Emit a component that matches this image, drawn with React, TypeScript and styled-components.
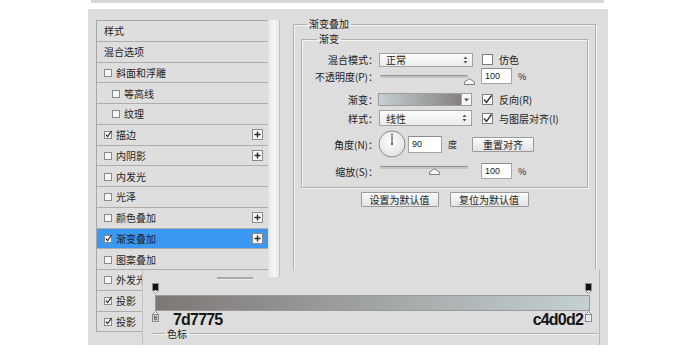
import React from 'react'
import styled, { createGlobalStyle } from 'styled-components'

const GlobalStyle = createGlobalStyle`
  html, body { margin: 0; padding: 0; background: #fff; }
  body {
    font-family: "Liberation Sans", "Noto Sans CJK SC", sans-serif;
    font-size: 10px;
    color: #222;
  }
`

const cjk = `"Noto Sans CJK SC", "Liberation Sans", sans-serif`

const Page = styled.div`
  width: 690px;
  height: 356px;
  overflow: hidden;
  background: #fff;
`
const TopStrip = styled.div`
  margin-left: 91px;
  width: 513px;
  height: 3px;
  background: #d6d6d6;
`
const Dialog = styled.div`
  position: relative;
  margin: 6px 0 0 88px;
  width: 520px;
  height: 336px;
  box-sizing: border-box;
  padding: 11px 0 0 8px;
  background: #dddddd;
  display: flex;
  align-items: flex-start;
`

/* ---------- style list ---------- */
const ListBox = styled.div`
  width: 172px;
  box-sizing: border-box;
  border-top: 1px solid #a6a6a6;
  border-left: 1px solid #a6a6a6;
  display: flex;
  flex-direction: column;
`
const ListRow = styled.div<{ $active?: boolean; $indent?: boolean }>`
  height: 20.75px;
  box-sizing: border-box;
  border-bottom: 1px solid #adadad;
  background: ${p => (p.$active ? '#3b98f2' : '#dedede')};
  display: flex;
  align-items: center;
  gap: 3px;
  padding: 0 5px 0 ${p => (p.$indent ? 15 : 7)}px;
  font-family: ${cjk};
  font-size: 10px;
  color: #1e1e1e;
`
const RowName = styled.span`
  flex: 1;
  white-space: nowrap;
`
const Scrollbar = styled.div`
  position: relative;
  z-index: 2;
  width: 12px;
  height: 257px;
  box-sizing: border-box;
  background: linear-gradient(to right, #e4e4e4, #f7f7f7 50%, #e9e9e9);
  border-right: 1px solid #c4c4c4;
`

/* ---------- right pane ---------- */
const RightPane = styled.div`
  margin: -2px 0 0 13px;
`
const Fieldset = styled.fieldset`
  margin: 0;
  min-width: 0;
  box-sizing: border-box;
  border: 1px solid #b0b0b0;
  box-shadow: inset 1px 1px 0 #f3f3f3, 1px 1px 0 #f3f3f3;
`
const OuterSet = styled(Fieldset)`
  width: 303px;
  height: 322px;
  padding: 3px 7px 0;
`
const InnerSet = styled(Fieldset)`
  padding: 7px 0 8px;
`
const Legend = styled.legend<{ $left: number }>`
  margin-left: ${p => p.$left}px;
  padding: 0 2px;
  font-family: ${cjk};
  font-size: 10px;
  line-height: 12px;
  color: #222;
`
const FormRow = styled.div<{ $h: number; $top: number }>`
  display: grid;
  grid-template-columns: 76px auto;
  align-items: center;
  height: ${p => p.$h}px;
  margin-top: ${p => p.$top}px;
`
const Label = styled.div`
  text-align: right;
  white-space: nowrap;
  font-family: ${cjk};
  font-size: 10px;
  color: #222;
`
const Controls = styled.div`
  display: flex;
  align-items: center;
  height: 100%;
`
const Select = styled.div<{ $w: number; $h: number }>`
  width: ${p => p.$w}px;
  height: ${p => p.$h}px;
  margin-left: 1px;
  box-sizing: border-box;
  border: 1px solid #a3a3a3;
  background: linear-gradient(#fcfcfc, #ececec);
  display: flex;
  align-items: center;
  justify-content: space-between;
  padding: 0 4px 0 6px;
  font-family: ${cjk};
  font-size: 10px;
`
const Box = styled.div<{ $gap: number }>`
  width: 11px;
  height: 11px;
  margin-left: ${p => p.$gap}px;
  box-sizing: border-box;
  border: 1px solid #7d7d7d;
  background: #fff;
  display: flex;
  align-items: center;
  justify-content: center;
`
const BoxText = styled.span`
  margin-left: 6px;
  white-space: nowrap;
  font-family: ${cjk};
  font-size: 10px;
`
const Slider = styled.div`
  position: relative;
  width: 93px;
  height: 100%;
  margin-left: 2px;
`
const Track = styled.div<{ $top: number }>`
  position: absolute;
  left: 0;
  top: ${p => p.$top}px;
  width: 88px;
  height: 3px;
  border-radius: 2px;
  background: #c4c4c4;
  border-top: 1px solid #929292;
  box-sizing: border-box;
`
const Thumb = styled.svg<{ $x: number; $top: number }>`
  position: absolute;
  left: ${p => p.$x}px;
  top: ${p => p.$top}px;
`
const NumField = styled.div<{ $w: number; $h: number; $gap: number }>`
  width: ${p => p.$w}px;
  height: ${p => p.$h}px;
  margin-left: ${p => p.$gap}px;
  box-sizing: border-box;
  border: 1px solid #a5a5a5;
  border-top-color: #8a8a8a;
  background: #fff;
  padding-left: 3px;
  display: flex;
  align-items: center;
  font-family: "Liberation Sans", sans-serif;
  font-size: 9px;
  color: #222;
`
const Unit = styled.span<{ $gap: number }>`
  margin-left: ${p => p.$gap}px;
  font-family: ${cjk};
  font-size: 9px;
`
const GradPreview = styled.div`
  width: 94px;
  height: 13px;
  box-sizing: border-box;
  border: 1px solid #9d9d9d;
  background: linear-gradient(to right, #c4d0d2, #7d7775);
  display: flex;
  justify-content: flex-end;
`
const DropTab = styled.div`
  width: 9px;
  height: 100%;
  background: #f6f6f6;
  border-left: 1px solid #a8a8a8;
  display: flex;
  align-items: center;
  justify-content: center;
`
const Button = styled.div<{ $w: number; $gap?: number }>`
  width: ${p => p.$w}px;
  height: 15px;
  margin-left: ${p => p.$gap ?? 0}px;
  box-sizing: border-box;
  border: 1px solid #9a9a9a;
  border-radius: 1px;
  background: linear-gradient(#fbfbfb, #e3e3e3);
  box-shadow: inset 0 1px 0 #fff;
  display: flex;
  align-items: center;
  justify-content: center;
  font-family: ${cjk};
  font-size: 10px;
  color: #222;
`
const ButtonRow = styled.div`
  display: flex;
  justify-content: center;
  gap: 11px;
  margin-top: 4px;
`

/* ---------- gradient editor crop, lying over the dialog ---------- */
const Overlay = styled.div`
  position: absolute;
  z-index: 1;
  left: 54px;
  top: 261px;
  width: 458px;
  height: 75px;
  box-sizing: border-box;
  background: #dddddd;
  border-left: 1px solid #c3c3c3;
  border-right: 1px solid #b8b8b8;
  padding-left: 9px;
  display: flex;
  flex-direction: column;
`
const DecoRow = styled.div`
  height: 15px;
  display: flex;
  align-items: flex-start;
`
const DecoLine = styled.div`
  margin: 7px 0 0 65px;
  width: 36px;
  height: 2px;
  background: #a8a8a8;
  border-bottom: 1px solid #ececec;
`
const StopRow = styled.div<{ $h: number }>`
  width: 440px;
  height: ${p => p.$h}px;
  display: flex;
  align-items: flex-start;
  justify-content: space-between;
`
const Bar = styled.div`
  margin: 1px 0 0 3px;
  width: 435px;
  height: 19px;
  box-sizing: border-box;
  border: 1px solid #9a9a9a;
  background: linear-gradient(to right, #7d7775, #c4d0d2);
`
const StopLabel = styled.span<{ $left?: boolean }>`
  flex: ${p => (p.$left ? 1 : 'none')};
  margin: 1px ${p => (p.$left ? 0 : 2)}px 0 ${p => (p.$left ? 14 : 0)}px;
  font-family: "Liberation Sans", sans-serif;
  font-weight: bold;
  font-size: 16px;
  line-height: 16px;
  letter-spacing: -0.8px;
  color: #161616;
`
const ColorStopSet = styled.fieldset`
  margin: 0;
  width: 446px;
  height: 20px;
  box-sizing: border-box;
  padding: 0;
  border: 0;
  border-top: 1px solid #b0b0b0;
  box-shadow: 0 1px 0 #f3f3f3 inset;
`

/* ---------- icons ---------- */
const SmallBox = ({ on }: { on: boolean }) => (
  <svg width="9" height="9" viewBox="0 0 9 9">
    <rect x="0.5" y="1.5" width="7" height="7" fill="#f6f6f6" stroke="#8a8a8a" />
    {on && <path d="M1.8 4.6 L3.6 6.6 L7.6 1" fill="none" stroke="#2a2a2a" strokeWidth="1.2" />}
  </svg>
)
const PlusBox = () => (
  <svg width="11" height="11" viewBox="0 0 11 11">
    <rect x="0.5" y="0.5" width="10" height="10" fill="#f8f8f8" stroke="#8a8a8a" />
    <path d="M5.5 2.5 V8.5 M2.5 5.5 H8.5" stroke="#2a2a2a" strokeWidth="1.4" />
  </svg>
)
const Tick = () => (
  <svg width="9" height="9" viewBox="0 0 9 9">
    <path d="M1 4.5 L3.5 7.5 L8.5 0.5" fill="none" stroke="#2b2b2b" strokeWidth="1.3" />
  </svg>
)
const UpDown = () => (
  <svg width="5" height="8" viewBox="0 0 5 8">
    <path d="M0.5 3 L2.5 0.5 L4.5 3 Z M0.5 5 L2.5 7.5 L4.5 5 Z" fill="#555" />
  </svg>
)
const DownArrow = () => (
  <svg width="5" height="4" viewBox="0 0 5 4">
    <path d="M0 0.5 H5 L2.5 3.5 Z" fill="#555" />
  </svg>
)
const ThumbShape = ({ x, top }: { x: number; top: number }) => (
  <Thumb $x={x} $top={top} width="11" height="7" viewBox="0 0 11 7">
    <path d="M0.5 6.5 V4 L5.5 0.8 L10.5 4 V6.5 Z" fill="#fafafa" stroke="#7c7c7c" />
  </Thumb>
)
const Dial = () => (
  <svg width="28" height="28" viewBox="0 0 28 28">
    <defs>
      <radialGradient id="dialFill" cx="45%" cy="40%" r="60%">
        <stop offset="0" stopColor="#ffffff" />
        <stop offset="1" stopColor="#e2e2e2" />
      </radialGradient>
    </defs>
    <circle cx="14" cy="14" r="13" fill="url(#dialFill)" stroke="#8c8c8c" />
    <path d="M14 14 V3.5" stroke="#3a3a3a" strokeWidth="1" />
    <circle cx="14" cy="14" r="1" fill="#3a3a3a" />
  </svg>
)
const TopStop = () => (
  <svg width="7" height="11" viewBox="0 0 7 11">
    <rect x="0.5" y="0.5" width="6" height="7" fill="#111" stroke="#8a8a8a" />
    <path d="M0.5 7.5 L3.5 10.5 L6.5 7.5 Z" fill="#fff" stroke="#8a8a8a" />
  </svg>
)
const BottomStop = ({ fill }: { fill: string }) => (
  <svg width="7" height="11" viewBox="0 0 7 11">
    <path d="M0.5 3.5 L3.5 0.5 L6.5 3.5 Z" fill="#fff" stroke="#8a8a8a" />
    <rect x="0.5" y="3.5" width="6" height="7" fill="#fff" stroke="#8a8a8a" />
    <rect x="1.5" y="4.5" width="4" height="5" fill={fill} />
  </svg>
)

type StyleRow = { name: string; box?: boolean; indent?: boolean; plus?: boolean; active?: boolean }

const styleRows: StyleRow[] = [
  { name: '样式' },
  { name: '混合选项' },
  { name: '斜面和浮雕', box: false },
  { name: '等高线', box: false, indent: true },
  { name: '纹理', box: false, indent: true },
  { name: '描边', box: true, plus: true },
  { name: '内阴影', box: false, plus: true },
  { name: '内发光', box: false },
  { name: '光泽', box: false },
  { name: '颜色叠加', box: false, plus: true },
  { name: '渐变叠加', box: true, plus: true, active: true },
  { name: '图案叠加', box: false },
  { name: '外发光', box: false },
  { name: '投影', box: true, plus: true },
  { name: '投影', box: true, plus: true },
]

export default function App() {
  return (
    <Page>
      <GlobalStyle />
      <TopStrip />
      <Dialog>
        <ListBox>
          {styleRows.map((r, i) => (
            <ListRow key={i} $active={r.active} $indent={r.indent}>
              {r.box !== undefined && <SmallBox on={r.box} />}
              <RowName>{r.name}</RowName>
              {r.plus && <PlusBox />}
            </ListRow>
          ))}
        </ListBox>
        <Scrollbar />

        <RightPane>
          <OuterSet>
            <Legend $left={6}>渐变叠加</Legend>
            <InnerSet>
              <Legend $left={15}>渐变</Legend>

              <FormRow $h={14} $top={0}>
                <Label>混合模式：</Label>
                <Controls>
                  <Select $w={94} $h={14}>
                    <span>正常</span>
                    <UpDown />
                  </Select>
                  <Box $gap={9} />
                  <BoxText>仿色</BoxText>
                </Controls>
              </FormRow>

              <FormRow $h={16} $top={2}>
                <Label>不透明度(P)：</Label>
                <Controls>
                  <Slider>
                    <Track $top={7} />
                    <ThumbShape x={84} top={10} />
                  </Slider>
                  <NumField $w={31} $h={16} $gap={8}>100</NumField>
                  <Unit $gap={6}>%</Unit>
                </Controls>
              </FormRow>

              <FormRow $h={13} $top={8}>
                <Label>渐变：</Label>
                <Controls>
                  <GradPreview>
                    <DropTab>
                      <DownArrow />
                    </DropTab>
                  </GradPreview>
                  <Box $gap={10}>
                    <Tick />
                  </Box>
                  <BoxText>反向(R)</BoxText>
                </Controls>
              </FormRow>

              <FormRow $h={16} $top={5}>
                <Label>样式：</Label>
                <Controls>
                  <Select $w={93} $h={16}>
                    <span>线性</span>
                    <UpDown />
                  </Select>
                  <Box $gap={10}>
                    <Tick />
                  </Box>
                  <BoxText>与图层对齐(I)</BoxText>
                </Controls>
              </FormRow>

              <FormRow $h={28} $top={4}>
                <Label>角度(N)：</Label>
                <Controls>
                  <Dial />
                  <NumField $w={34} $h={17} $gap={2}>90</NumField>
                  <Unit $gap={6}>度</Unit>
                  <Button $w={62} $gap={15}>重置对齐</Button>
                </Controls>
              </FormRow>

              <FormRow $h={16} $top={5}>
                <Label>缩放(S)：</Label>
                <Controls>
                  <Slider>
                    <Track $top={3} />
                    <ThumbShape x={49} top={5} />
                  </Slider>
                  <NumField $w={31} $h={16} $gap={8}>100</NumField>
                  <Unit $gap={6}>%</Unit>
                </Controls>
              </FormRow>
            </InnerSet>

            <ButtonRow>
              <Button $w={78}>设置为默认值</Button>
              <Button $w={79}>复位为默认值</Button>
            </ButtonRow>
          </OuterSet>
        </RightPane>

        <Overlay>
          <DecoRow>
            <DecoLine />
          </DecoRow>
          <StopRow $h={11}>
            <TopStop />
            <TopStop />
          </StopRow>
          <Bar />
          <StopRow $h={20}>
            <BottomStop fill="#8a8482" />
            <StopLabel $left>7d7775</StopLabel>
            <StopLabel>c4d0d2</StopLabel>
            <BottomStop fill="#dfe6e7" />
          </StopRow>
          <ColorStopSet>
            <Legend $left={13}>色标</Legend>
          </ColorStopSet>
        </Overlay>
      </Dialog>
    </Page>
  )
}
